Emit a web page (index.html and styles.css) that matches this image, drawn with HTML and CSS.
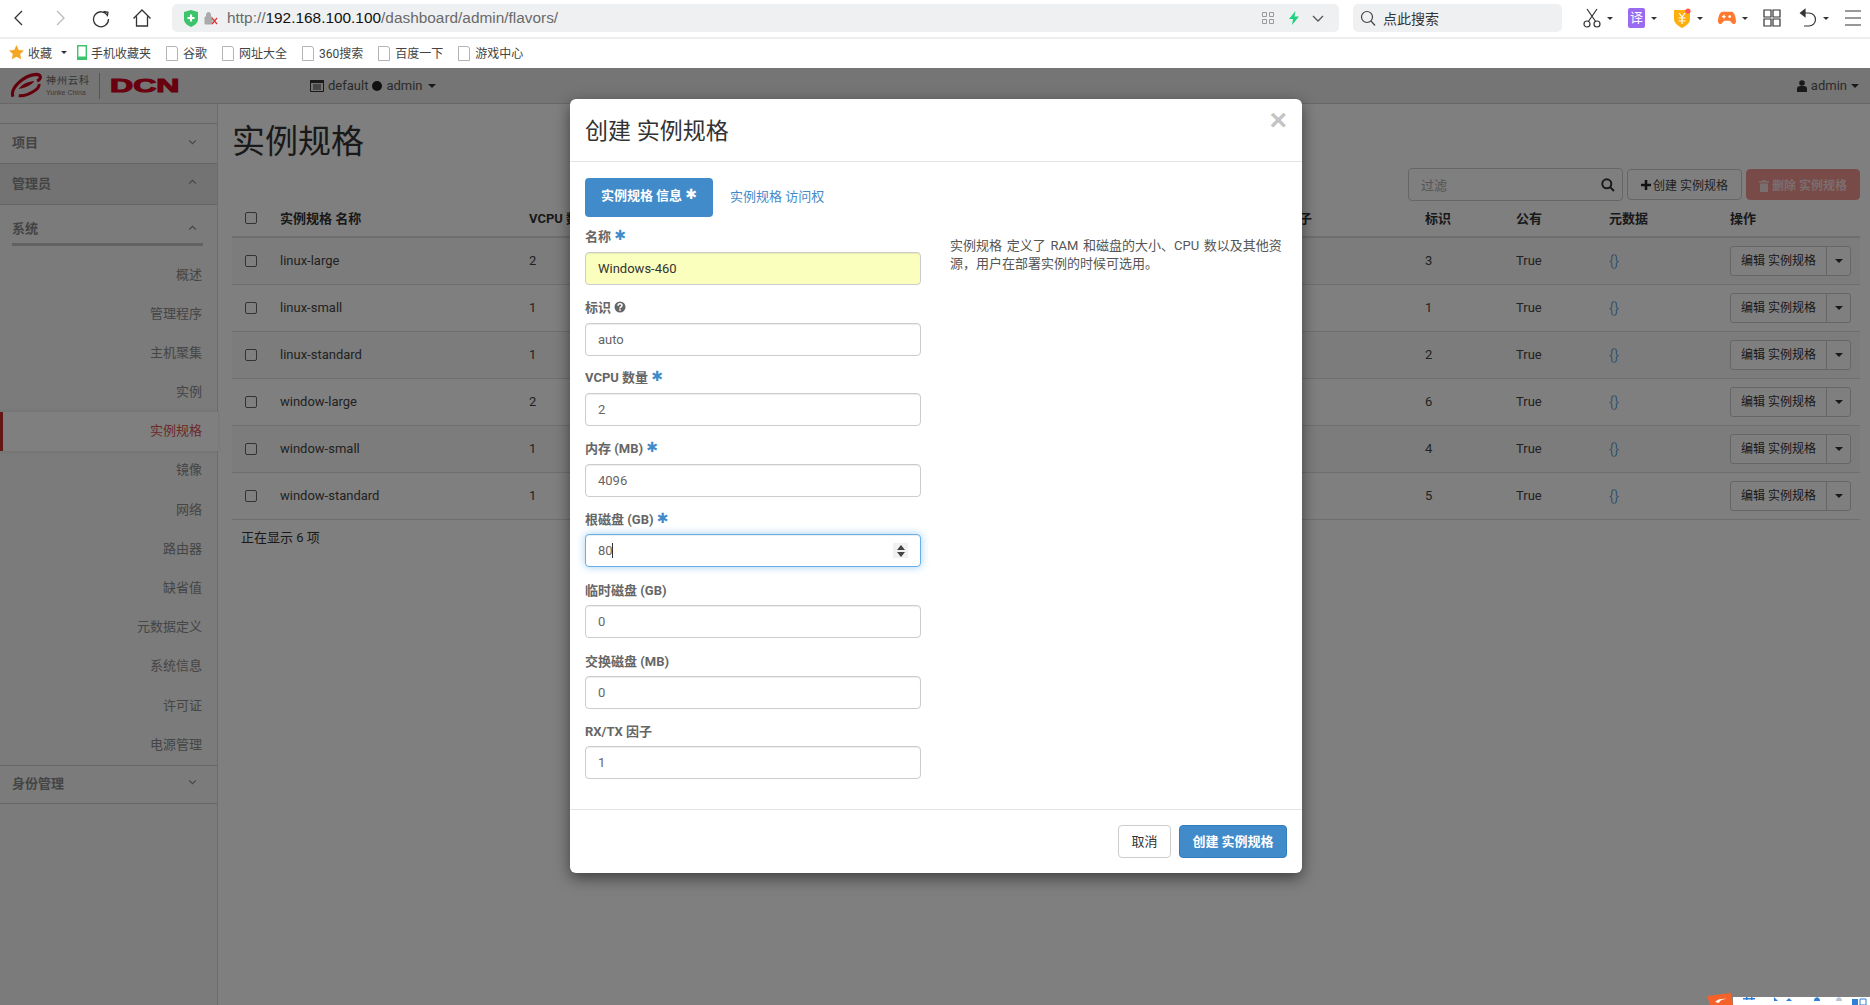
FILE: index.html
```html
<!DOCTYPE html>
<html lang="zh">
  <head>
    <meta charset="utf-8">
    <title>实例规格 - OpenStack Dashboard</title>
    <link rel="stylesheet" href="styles.css">
  </head>
  <body>
    <!-- browser chrome -->
    <div class="toolbar">
      <div class="nav-icons">
        <svg class="tool" viewBox="0 0 20 20"><path d="M13 3 6 10l7 7"/></svg>
        <svg class="tool tool-off" viewBox="0 0 20 20"><path d="m7 3 7 7-7 7"/></svg>
        <svg class="tool" viewBox="0 0 20 20"><path d="M16.5 7.5A7.5 7.5 0 1 0 17.5 11M12.5 3.5l4.5 .8-.8 4"/></svg>
        <svg class="tool" viewBox="0 0 20 20"><path d="M1.5 10.5 10 2l8.5 8.5M4.5 8.5V18h11V8.5"/></svg>
      </div>
      <div class="address">
        <svg class="shield" viewBox="0 0 14 17"><path d="M0 2 7 0l7 2v7c0 4-3 6-7 8-4-2-7-4-7-8z" fill="#3cc46c"/><path d="M7 4.500v7M3.500 8h7" stroke="#fff" stroke-width="2.200"/></svg>
        <svg class="lock" viewBox="0 0 15 14"><path d="M2 6h7v7H2zM3.500 6V3.500a2 2 0 0 1 4 0V6" fill="#aaa" stroke="#aaa"/><path d="m9 7 5 6m0-6-5 6" stroke="#d33" stroke-width="1.200"/></svg>
        <span class="url">http://<b>192.168.100.100</b>/dashboard/admin/flavors/</span>
        <svg class="qr" viewBox="0 0 12 12"><path d="M.5.500h4v4h-4zM7.500.500h4v4h-4zM.5 7.500h4v4h-4zM7.500 7.500h4v4h-4z"/></svg>
        <svg class="bolt" viewBox="0 0 10 14"><path d="M6.500 0 0 8h4l-1 6 7-8.500H5.500z" fill="#1fd17f"/></svg>
        <svg class="chev" viewBox="0 0 12 7"><path d="m1 1 5 5 5-5"/></svg>
      </div>
      <div class="search">
        <svg class="search-ico" viewBox="0 0 16 16"><circle cx="7" cy="7" r="5.500"/><path d="m11 11 4 4.500"/></svg>
        <span>点此搜索</span>
      </div>
      <div class="tools">
        <span class="tool-item">
          <svg class="tool-lg" viewBox="0 0 18 20"><path d="m4 1 9 13M14 1 5 14"/><circle cx="4" cy="16" r="3"/><circle cx="14" cy="16" r="3"/></svg>
          <i class="caret"></i>
        </span>
        <span class="tool-item">
          <span class="translate">译</span>
          <i class="caret"></i>
        </span>
        <span class="tool-item">
          <svg class="tool-lg" viewBox="0 0 18 20"><path d="M1 2h16v9c0 4-4 7-8 9-4-2-8-5-8-9z" fill="#ffae0d" stroke="none"/><path d="m6 5 3 4 3-4M5.500 10h7M5.500 13h7M9 9v7" stroke="#fff" stroke-width="1.200"/><circle cx="15" cy="3" r="2.600" fill="#f55" stroke="none"/></svg>
          <i class="caret"></i>
        </span>
        <span class="tool-item">
          <svg class="tool-lg game" viewBox="0 0 20 18"><path d="M5 2h10c3 0 5 6 5 11 0 3-3 4-5 1l-2-2H7l-2 2c-2 3-5 2-5-1C0 8 2 2 5 2z" fill="#ff7a2f" stroke="none"/><path d="M4.500 7.500h4M6.500 5.500v4" stroke="#fff" stroke-width="1.500"/><circle cx="13" cy="7.500" r="1.500" fill="#fff" stroke="none"/></svg>
          <i class="caret"></i>
        </span>
        <span class="tool-item tool-short">
          <svg class="tool-lg" viewBox="0 0 18 18"><path d="M1 1h7v7H1zM10 1h7v7h-7zM1 10h7v7H1zM10 10h7v7h-7z"/></svg>
        </span>
        <span class="tool-item">
          <svg class="tool-lg" viewBox="0 0 18 20"><path d="M2 5h8a5.800 5.800 0 0 1 0 13H5"/><path d="M6 1.500 1.500 5 6 8.500z" fill="#333"/></svg>
          <i class="caret"></i>
        </span>
        <span class="tool-item">
          <svg class="tool-lg" viewBox="0 0 18 18"><path d="M1 2h16M1 9h16M1 16h16"/></svg>
        </span>
      </div>
    </div>
    <div class="bookmarks">
      <svg class="star" viewBox="0 0 16 16"><path d="m8 0 2.400 5.200 5.600.7-4.100 3.800 1.100 5.600L8 12.500l-5 2.800 1.100-5.600L0 5.900l5.600-.7z" fill="#f5a623"/></svg>
      <span class="bm-fav">收藏</span>
      <i class="caret bm-caret"></i>
      <svg class="phone" viewBox="0 0 10 15"><path d="M.7.700h8.600v13.600H.7z" fill="none" stroke="#3cc46c" stroke-width="1.400"/><path d="M1 11.500h8V14H1z" fill="#3cc46c"/></svg>
      <span class="bm">手机收藏夹</span>
      <span class="bm bm-doc">谷歌</span>
      <span class="bm bm-doc">网址大全</span>
      <span class="bm bm-doc">360搜索</span>
      <span class="bm bm-doc">百度一下</span>
      <span class="bm bm-doc">游戏中心</span>
    </div>

    <!-- dashboard -->
    <div class="app">
      <header class="navbar">
        <div class="brand">
          <svg class="swirl" viewBox="0 0 34 27"><path d="M3 25C0 16 14 3 27 2c5 0 6 4 1 7" fill="none" stroke="#c8001c" stroke-width="3.200"/><path d="M9 24c9 1 22-7 21-12" fill="none" stroke="#c8001c" stroke-width="3"/><path d="M9 17c4-6 11-8 16-8-3 4-10 7-16 8z" fill="#c8001c"/></svg>
          <div class="brand-text">
            <span class="brand-cn">神州云科</span>
            <span class="brand-en">Yunke China</span>
          </div>
          <span class="brand-sep"></span>
          <span class="dcn">DCN</span>
        </div>
        <div class="picker">
          <svg class="picker-ico" viewBox="0 0 14 12"><path d="M.5.500h13v11H.5z" fill="none" stroke="#333"/><path d="M.5.500h13v2H.5zM3 5h8M3 7h8M3 9h8" fill="#333" stroke="#333"/></svg>
          <span>default</span>
          <span class="dot"></span>
          <span>admin</span>
          <i class="caret"></i>
        </div>
        <div class="user">
          <svg class="user-ico" viewBox="0 0 10 12"><circle cx="5" cy="3" r="2.800"/><path d="M0 12V8.500C0 7 1.500 6 3 6h4c1.500 0 3 1 3 2.500V12z"/></svg>
          <span>admin</span>
          <i class="caret"></i>
        </div>
      </header>

      <div class="main">
        <nav class="sidebar">
          <div class="side-head side-first"><span>项目</span><svg class="side-chev" viewBox="0 0 8 5"><path d="m1 1 3 3 3-3"/></svg></div>
          <div class="side-head side-open"><span>管理员</span><svg class="side-chev" viewBox="0 0 8 5"><path d="m1 4 3-3 3 3"/></svg></div>
          <div class="side-group"><span>系统</span><svg class="side-chev" viewBox="0 0 8 5"><path d="m1 4 3-3 3 3"/></svg></div>
          <a class="side-item">概述</a>
          <a class="side-item">管理程序</a>
          <a class="side-item">主机聚集</a>
          <a class="side-item">实例</a>
          <a class="side-item active">实例规格</a>
          <a class="side-item">镜像</a>
          <a class="side-item">网络</a>
          <a class="side-item">路由器</a>
          <a class="side-item">缺省值</a>
          <a class="side-item">元数据定义</a>
          <a class="side-item">系统信息</a>
          <a class="side-item">许可证</a>
          <a class="side-item">电源管理</a>
          <div class="side-head side-last"><span>身份管理</span><svg class="side-chev" viewBox="0 0 8 5"><path d="m1 1 3 3 3-3"/></svg></div>
        </nav>

        <section class="content">
          <h1>实例规格</h1>
          <div class="actions">
            <div class="filter">
              <span>过滤</span>
              <svg class="filter-ico" viewBox="0 0 14 14"><circle cx="5.800" cy="5.800" r="4.500"/><path d="m9 9 4 4"/></svg>
            </div>
            <button class="btn">
              <svg class="plus" viewBox="0 0 10 10"><path d="M5 0v10M0 5h10"/></svg>创建 实例规格
            </button>
            <button class="btn btn-danger">
              <svg class="trash" viewBox="0 0 10 12"><path d="M3.500 0h3v1H10v1.500H0V1h3.500zM1 3.500h8V12H1z"/></svg>删除 实例规格
            </button>
          </div>
          <table class="flavors">
            <colgroup>
              <col class="c-check"><col class="c-name"><col class="c-vcpu"><col class="c-factor">
              <col class="c-id"><col class="c-public"><col class="c-meta"><col class="c-ops">
            </colgroup>
            <thead>
              <tr><th><i class="check"></i></th><th>实例规格 名称</th><th>VCPU 数量</th><th>RX/TX 因子</th><th>标识</th><th>公有</th><th>元数据</th><th>操作</th></tr>
            </thead>
            <tbody>
              <tr><td><i class="check"></i></td><td>linux-large</td><td>2</td><td></td><td>3</td><td>True</td><td><a class="meta">{}</a></td><td><div class="btn-group"><span class="edit">编辑 实例规格</span><span class="more"><i class="caret"></i></span></div></td></tr>
              <tr><td><i class="check"></i></td><td>linux-small</td><td>1</td><td></td><td>1</td><td>True</td><td><a class="meta">{}</a></td><td><div class="btn-group"><span class="edit">编辑 实例规格</span><span class="more"><i class="caret"></i></span></div></td></tr>
              <tr><td><i class="check"></i></td><td>linux-standard</td><td>1</td><td></td><td>2</td><td>True</td><td><a class="meta">{}</a></td><td><div class="btn-group"><span class="edit">编辑 实例规格</span><span class="more"><i class="caret"></i></span></div></td></tr>
              <tr><td><i class="check"></i></td><td>window-large</td><td>2</td><td></td><td>6</td><td>True</td><td><a class="meta">{}</a></td><td><div class="btn-group"><span class="edit">编辑 实例规格</span><span class="more"><i class="caret"></i></span></div></td></tr>
              <tr><td><i class="check"></i></td><td>window-small</td><td>1</td><td></td><td>4</td><td>True</td><td><a class="meta">{}</a></td><td><div class="btn-group"><span class="edit">编辑 实例规格</span><span class="more"><i class="caret"></i></span></div></td></tr>
              <tr><td><i class="check"></i></td><td>window-standard</td><td>1</td><td></td><td>5</td><td>True</td><td><a class="meta">{}</a></td><td><div class="btn-group"><span class="edit">编辑 实例规格</span><span class="more"><i class="caret"></i></span></div></td></tr>
            </tbody>
          </table>
          <p class="count">正在显示 6 项</p>
        </section>
      </div>

      <div class="backdrop"></div>

      <div class="modal">
        <div class="modal-head">
          <h4>创建 实例规格</h4>
          <span class="close">×</span>
        </div>
        <div class="modal-body">
          <div class="tabs">
            <span class="tab tab-on">实例规格 信息 <em class="req">✱</em></span>
            <span class="tab">实例规格 访问权</span>
          </div>
          <div class="form-row">
            <form class="fields">
              <div class="field">
                <label>名称 <em class="req">✱</em></label>
                <input class="filled" type="text" value="Windows-460">
              </div>
              <div class="field">
                <label>标识 <svg class="help" viewBox="0 0 12 12"><circle cx="6" cy="6" r="5.500"/><path d="M4 4.800c0-2.600 4-2.600 4-.4 0 1.500-2 1.500-2 3" fill="none" stroke="#fff" stroke-width="1.500"/><path d="M5.200 8.300h1.600v1.500H5.200z" fill="#fff"/></svg></label>
                <input type="text" value="auto">
              </div>
              <div class="field">
                <label>VCPU 数量 <em class="req">✱</em></label>
                <input type="text" value="2">
              </div>
              <div class="field">
                <label>内存 (MB) <em class="req">✱</em></label>
                <input type="text" value="4096">
              </div>
              <div class="field">
                <label>根磁盘 (GB) <em class="req">✱</em></label>
                <div class="spin-wrap">
                  <input class="focused" type="text" value="80">
                  <span class="text-caret"></span>
                  <span class="spin"><i class="up"></i><i class="down"></i></span>
                </div>
              </div>
              <div class="field">
                <label>临时磁盘 (GB)</label>
                <input type="text" value="0">
              </div>
              <div class="field">
                <label>交换磁盘 (MB)</label>
                <input type="text" value="0">
              </div>
              <div class="field">
                <label>RX/TX 因子</label>
                <input type="text" value="1">
              </div>
            </form>
            <p class="help-text">实例规格 定义了 RAM 和磁盘的大小、CPU 数以及其他资源，用户在部署实例的时候可选用。</p>
          </div>
        </div>
        <div class="modal-foot">
          <button class="foot-btn">取消</button>
          <button class="foot-btn foot-primary">创建 实例规格</button>
        </div>
      </div>
    </div>

    <!-- tip of the desktop tray showing at the bottom edge -->
    <svg class="tray" viewBox="0 0 163 12">
      <path d="M26 4h137v8H26z" fill="#fff"/>
      <path d="M0 3 24 0l2 12H3z" fill="#f4622a"/>
      <path d="M8 9c2-3 8-4 12-3-4 0-7 1-8 4z" fill="#fff"/>
      <path d="M36 5h12v1.500H36zM39 4h1.500v3H39zM44 4h1.500v3H44z" fill="#2f7fd6"/>
      <path d="m67 4 4 4h-4zM82 5l3 3h-6zM107 8c0-5 6-5 6 0z" fill="#2f7fd6"/>
      <path d="M129 8c0-5 6-5 6 0z" fill="#b8c4d6"/>
      <path d="M145 6h6v6h-6z" fill="#2f7fd6"/>
      <path d="M153 6h6v6h-6z" fill="none" stroke="#2f7fd6"/>
    </svg>
  </body>
</html>
```

FILE: styles.css
```css
* {
  box-sizing: border-box;
}

html, body {
  height: 100%;
}

body {
  margin: 0;
  overflow: hidden;
  background: #fff;
  color: #333;
  font-family: Roboto, "Noto Sans CJK SC", sans-serif;
  font-size: 13px;
  display: flex;
  flex-direction: column;
}

.caret {
  display: inline-block;
  width: 0;
  height: 0;
  border-top: 4px solid #333;
  border-left: 4px solid transparent;
  border-right: 4px solid transparent;
}

/* browser chrome */
.toolbar {
  height: 39px;
  flex: none;
  display: flex;
  align-items: center;
  padding: 0 0 1px 9px;
  border-bottom: 2px solid #eee;
}

.nav-icons {
  width: 163px;
  flex: none;
  display: flex;
  gap: 21px;
}

.tool {
  width: 20px;
  height: 20px;
  fill: none;
  stroke: #333;
  stroke-width: 1.3;
}

.tool-off {
  stroke: #bbb;
}

.address {
  width: 1167px;
  height: 28px;
  flex: none;
  display: flex;
  align-items: center;
  background: #eff0f2;
  border-radius: 5px;
  padding: 0 15px 0 12px;
  font-family: "Liberation Sans", "Noto Sans CJK SC", sans-serif;
  font-size: 15.4px;
  color: #6a6a6a;
}

.shield {
  width: 14px;
  height: 17px;
}

.lock {
  width: 15px;
  height: 14px;
  margin-left: 5px;
}

.url {
  margin-left: 9px;
  flex: 1;
}

.url b {
  font-weight: 400;
  color: #111;
}

.qr {
  width: 12px;
  height: 12px;
  fill: none;
  stroke: #999;
  margin-right: 15px;
}

.bolt {
  width: 10px;
  height: 14px;
  margin-right: 13px;
}

.chev {
  width: 12px;
  height: 7px;
  fill: none;
  stroke: #555;
  stroke-width: 1.3;
}

.search {
  width: 209px;
  height: 28px;
  flex: none;
  margin-left: 14px;
  display: flex;
  align-items: center;
  gap: 7px;
  padding-left: 7px;
  background: #eff0f2;
  border-radius: 5px;
  font-size: 14px;
  color: #333;
}

.search-ico {
  width: 16px;
  height: 16px;
  fill: none;
  stroke: #444;
  stroke-width: 1.2;
}

.tools {
  margin-left: 21px;
  display: flex;
  align-items: center;
}

.tool-item {
  width: 45px;
  flex: none;
  display: flex;
  align-items: center;
  gap: 6px;
}

.tool-short {
  width: 36px;
}

.tool-item .caret {
  border-top-width: 3px;
  border-left-width: 3px;
  border-right-width: 3px;
}

.tool-lg {
  width: 18px;
  height: 20px;
  fill: none;
  stroke: #333;
  stroke-width: 1.2;
  flex: none;
}

.game {
  height: 18px;
}

.translate {
  width: 17px;
  height: 20px;
  flex: none;
  background: #9a6bf0;
  border-radius: 2px;
  color: #fff;
  font-size: 13px;
  line-height: 20px;
  text-align: center;
}

.bookmarks {
  height: 29px;
  flex: none;
  display: flex;
  align-items: center;
  padding: 0 0 2px 9px;
  font-size: 12px;
  color: #444;
}

.star {
  width: 15px;
  height: 15px;
}

.bm-fav {
  margin-left: 4px;
}

.bm-caret {
  margin-left: 9px;
  border-top-width: 3px;
  border-left-width: 3px;
  border-right-width: 3px;
}

.phone {
  width: 10px;
  height: 15px;
  margin-left: 10px;
}

.bm {
  margin-left: 4px;
}

.bm-doc {
  margin-left: 15px;
  padding-left: 17px;
  position: relative;
}

.bm-doc::before {
  content: "";
  position: absolute;
  left: 0;
  top: 2px;
  width: 10px;
  height: 13px;
  border: 1px solid #b4b4b4;
  border-top-right-radius: 3px;
}

/* dashboard */
.app {
  position: relative;
  flex: 1;
  min-height: 0;
  display: flex;
  flex-direction: column;
}

.navbar {
  height: 36px;
  flex: none;
  display: flex;
  align-items: center;
  background: #eaeaea;
  border-bottom: 1px solid #d0d0d0;
  color: #555;
}

.brand {
  width: 310px;
  flex: none;
  display: flex;
  align-items: center;
  padding-left: 10px;
}

.swirl {
  width: 33px;
  height: 27px;
  flex: none;
}

.brand-text {
  margin-left: 3px;
  width: 50px;
  flex: none;
  display: flex;
  flex-direction: column;
  line-height: 1;
  white-space: nowrap;
}

.brand-cn {
  font-size: 10px;
  color: #666;
  letter-spacing: 1px;
}

.brand-en {
  font-size: 7px;
  color: #777;
  margin-top: 3px;
  font-family: "Liberation Sans", sans-serif;
}

.brand-sep {
  width: 1px;
  height: 26px;
  margin-left: 3px;
  background: #aaa;
}

.dcn {
  margin-left: 10px;
  font-family: "Liberation Sans", sans-serif;
  font-weight: 700;
  font-size: 18px;
  line-height: 26px;
  color: #d0001e;
  -webkit-text-stroke: 1px #d0001e;
  transform: scaleX(1.78);
  transform-origin: left center;
}

.picker {
  display: flex;
  align-items: center;
  gap: 4px;
}

.picker-ico {
  width: 14px;
  height: 12px;
}

.dot {
  width: 10px;
  height: 10px;
  border-radius: 50%;
  background: #222;
}

.picker .caret {
  margin-left: 1px;
}

.user {
  margin-left: auto;
  margin-right: 11px;
  display: flex;
  align-items: center;
  gap: 4px;
}

.user-ico {
  width: 10px;
  height: 12px;
  fill: #333;
}

.main {
  flex: 1;
  min-height: 0;
  display: flex;
}

.sidebar {
  width: 218px;
  flex: none;
  padding-top: 19px;
  background: #f6f6f6;
  border-right: 1px solid #d8d8d8;
  color: #8a8a8a;
}

.side-head {
  height: 41px;
  display: flex;
  align-items: center;
  justify-content: space-between;
  padding: 0 20px 4px 12px;
  border-bottom: 1px solid #ccc;
  font-weight: 700;
  color: #888;
}

.side-first {
  border-top: 1px solid #ccc;
}

.side-open {
  background: #e6e6e6;
}

.side-group {
  height: 41px;
  margin: 0 14px 9.5px 12px;
  padding: 13px 6px 0 0;
  display: flex;
  justify-content: space-between;
  border-bottom: 3px solid #c4c4c4;
  font-weight: 700;
  color: #888;
}

.side-group .side-chev {
  margin-top: 7px;
}

.side-chev {
  width: 9px;
  height: 6px;
  fill: none;
  stroke: #888;
  stroke-width: 1;
}

.side-item {
  display: block;
  height: 39.2px;
  line-height: 37px;
  padding-right: 15px;
  text-align: right;
  color: #8a8a8a;
}

.side-item.active {
  background: #fff;
  border-left: 3px solid #c9302c;
  margin-right: -1px;
  padding-right: 16px;
  color: #d9534f;
  box-shadow: 0 0 4px rgba(0, 0, 0, 0.12);
  position: relative;
}

.side-last {
  border-top: 1px solid #ccc;
  height: 39px;
}

.content {
  flex: 1;
  min-width: 0;
  padding: 18px 10px 0 14px;
}

h1 {
  margin: 0;
  font-size: 33px;
  line-height: 40px;
  font-weight: 400;
  color: #333;
}

.actions {
  margin-top: 6px;
  height: 33px;
  display: flex;
  justify-content: flex-end;
  gap: 4px;
}

.filter {
  width: 215px;
  display: flex;
  align-items: center;
  justify-content: space-between;
  padding: 0 7px 0 12px;
  border: 1px solid #ccc;
  border-radius: 4px;
  color: #aaa;
}

.filter-ico {
  width: 14px;
  height: 14px;
  fill: none;
  stroke: #333;
  stroke-width: 2;
}

.btn {
  width: 115px;
  height: 31px;
  margin-top: 1px;
  padding: 0;
  background: #fff;
  border: 1px solid #ccc;
  border-radius: 4px;
  font-family: inherit;
  font-size: 12px;
  color: #444;
}

.btn-danger {
  width: 114px;
  background: #f09490;
  border-color: #f09490;
  color: #f6dcdc;
  font-weight: 700;
}

.plus {
  width: 10px;
  height: 10px;
  margin-right: 2px;
  fill: none;
  stroke: #222;
  stroke-width: 2.5;
}

.trash {
  width: 10px;
  height: 12px;
  margin-right: 3px;
  fill: #f6dcdc;
  vertical-align: -2px;
}

.flavors {
  width: 100%;
  table-layout: fixed;
  border-collapse: collapse;
  color: #444;
}

.c-check { width: 36px; }
.c-name { width: 249px; }
.c-vcpu { width: 716px; }
.c-factor { width: 180px; }
.c-id { width: 91px; }
.c-public { width: 93px; }
.c-meta { width: 121px; }
.c-ops { width: 142px; }

.flavors th {
  height: 36px;
  padding: 0 0 3px 12px;
  text-align: left;
  font-weight: 700;
  color: #333;
  border-bottom: 2px solid #ddd;
  white-space: nowrap;
}

.flavors th:first-child {
  padding-bottom: 1px;
}

.flavors td {
  height: 47px;
  padding: 0 0 0 12px;
  border-bottom: 1px solid #ddd;
}

.flavors tbody tr:nth-child(odd) {
  background: #f9f9f9;
}

.check {
  display: block;
  width: 12px;
  height: 12px;
  margin-left: 1px;
  border: 1px solid #666;
  border-radius: 2px;
  background: #fff;
}

.meta {
  font-size: 15px;
  font-weight: 300;
  color: #428bca;
}

.btn-group {
  display: flex;
  width: 121px;
  height: 30px;
  border: 1px solid #ccc;
  border-radius: 3px;
  background: #fff;
  font-size: 12px;
  line-height: 28px;
  color: #333;
}

.edit {
  width: 96px;
  text-align: center;
  border-right: 1px solid #ccc;
}

.more {
  flex: 1;
  display: flex;
  align-items: center;
  justify-content: center;
}

.count {
  margin: 8px 0 0 9px;
  line-height: 20px;
  color: #333;
}

/* modal layer */
.backdrop {
  position: absolute;
  inset: 0;
  background: rgba(0, 0, 0, 0.5);
}

.modal {
  position: absolute;
  left: 570px;
  top: 31px;
  width: 732px;
  height: 774px;
  display: flex;
  flex-direction: column;
  background: #fff;
  border-radius: 6px;
  box-shadow: 0 5px 15px rgba(0, 0, 0, 0.5);
}

.modal-head {
  height: 63px;
  flex: none;
  display: flex;
  align-items: center;
  justify-content: space-between;
  padding: 0 15px 2px 15px;
  border-bottom: 1px solid #e5e5e5;
}

.modal-head h4 {
  margin: 0;
  font-size: 23px;
  font-weight: 400;
  color: #333;
}

.close {
  font-family: "Liberation Sans", sans-serif;
  font-size: 30px;
  font-weight: 700;
  line-height: 1;
  margin-bottom: 18px;
  color: #c4c4c4;
}

.modal-body {
  flex: 1;
  padding: 16px 15px 0;
}

.tabs {
  display: flex;
  height: 39px;
  align-items: center;
  gap: 17px;
  color: #428bca;
}

.tab {
  padding-bottom: 5px;
}

.tab-on {
  width: 128px;
  height: 39px;
  padding-bottom: 0;
  line-height: 36px;
  text-align: center;
  background: #428bca;
  border-radius: 4px;
  color: #fff;
  font-weight: 700;
}

.req {
  font-family: "DejaVu Sans", sans-serif;
  font-style: normal;
  font-size: 14px;
  line-height: 1;
  color: #428bca;
  vertical-align: 1px;
}

.tab-on .req {
  color: #fff;
}

.form-row {
  display: flex;
  gap: 29px;
  margin-top: 10px;
}

.fields {
  width: 336px;
  flex: none;
}

.field {
  height: 70.6px;
}

.field label {
  display: block;
  height: 25px;
  line-height: 19px;
  font-weight: 700;
  color: #666;
}

.field:nth-child(n+5) label {
  padding-top: 1px;
}

.field input {
  display: block;
  width: 100%;
  height: 33px;
  padding: 0 12px;
  border: 1px solid #ccc;
  border-radius: 4px;
  box-shadow: inset 0 1px 1px rgba(0, 0, 0, 0.075);
  font-family: inherit;
  font-size: 13px;
  color: #666;
  outline: 0;
}

.field input.filled {
  background: #faffbd;
  color: #333;
}

.field input.focused {
  border-color: #66afe9;
  box-shadow: inset 0 1px 1px rgba(0, 0, 0, 0.075), 0 0 8px rgba(102, 175, 233, 0.6);
}

.help {
  width: 12px;
  height: 12px;
  fill: #666;
  vertical-align: -1px;
}

.spin-wrap {
  position: relative;
}

.text-caret {
  position: absolute;
  left: 27px;
  top: 9px;
  width: 1px;
  height: 15px;
  background: #333;
}

.spin {
  position: absolute;
  right: 13px;
  top: 9px;
  width: 15px;
  height: 15px;
  background: #f1f1f1;
  display: flex;
  flex-direction: column;
  align-items: center;
  justify-content: center;
  gap: 2px;
}

.spin i {
  width: 0;
  height: 0;
  border-left: 4px solid transparent;
  border-right: 4px solid transparent;
}

.spin .up {
  border-bottom: 5px solid #444;
}

.spin .down {
  border-top: 5px solid #444;
}

.help-text {
  width: 337px;
  margin: 10px 0 0;
  line-height: 18px;
  word-spacing: 1.5px;
  color: #555;
}

.modal-foot {
  height: 64px;
  flex: none;
  display: flex;
  justify-content: flex-end;
  align-items: flex-start;
  gap: 8px;
  padding: 15px 15px 0;
  border-top: 1px solid #e5e5e5;
}

.foot-btn {
  width: 53px;
  height: 33px;
  padding: 0 0 3px;
  background: #fff;
  border: 1px solid #ccc;
  border-radius: 4px;
  font-family: inherit;
  font-size: 13px;
  color: #333;
}

.foot-primary {
  width: 108px;
  background: #428bca;
  border-color: #357ebd;
  color: #fff;
  font-weight: 700;
}

.tray {
  position: fixed;
  right: 0;
  bottom: 0;
  width: 163px;
  height: 12px;
}
```
